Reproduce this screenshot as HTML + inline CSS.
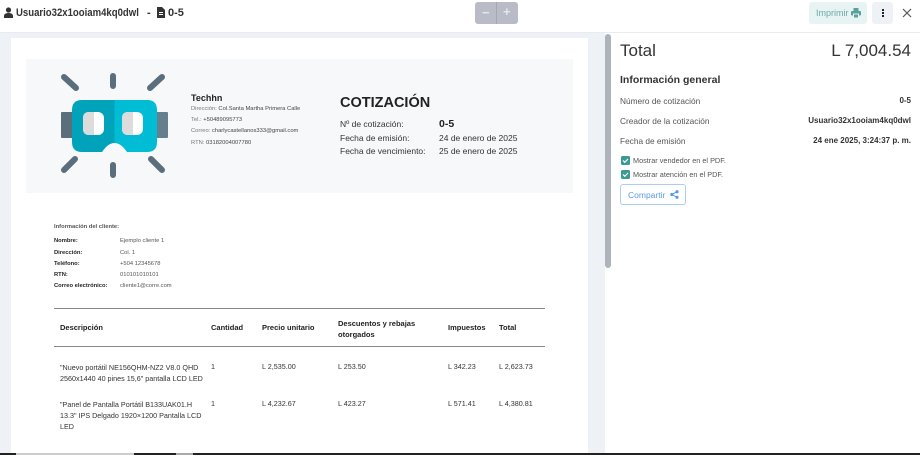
<!DOCTYPE html>
<html><head><meta charset="utf-8"><style>
*{margin:0;padding:0;box-sizing:border-box}
body{width:920px;height:455px;overflow:hidden;background:#fff;font-family:"Liberation Sans",sans-serif;color:#333;position:relative}
.abs{position:absolute}
.top{left:0;top:0;width:920px;height:33px;background:#fff;border-bottom:1px solid #e8ebef}
.left{left:0;top:33px;width:605px;height:422px;background:#eef2f7}
.paper{left:11px;top:38px;width:577px;height:420px;background:#fff}
.hdr{left:26px;top:59px;width:547px;height:134px;background:#f7f8fa}
.sb{left:605px;top:34px;width:6px;height:234px;background:#adb3ba;border-radius:3px}
.t{position:absolute;white-space:nowrap}
.th{font-weight:bold;font-size:7.5px;color:#222}
.td{font-size:7.2px;color:#333}
</style></head><body>
<div class="abs top"></div>
<div class="abs left"></div>
<div class="abs paper"></div>
<div class="abs hdr"></div>
<div class="abs sb"></div>
<!-- top bar -->
<svg class="abs" style="left:4px;top:7px" width="9" height="11" viewBox="0 0 9 11"><circle cx="4.5" cy="3" r="2.6" fill="#333"/><path d="M0 11v-2c0-2 2-3 4.5-3S9 7 9 9v2z" fill="#333"/></svg>
<div class="t" style="left:16px;top:7px;font-size:11px;font-weight:bold;color:#333;transform:scaleX(0.87);transform-origin:left">Usuario32x1ooiam4kq0dwl</div>
<div class="t" style="left:147px;top:7px;font-size:11px;font-weight:bold;color:#333">-</div>
<svg class="abs" style="left:157px;top:7px" width="8" height="11" viewBox="0 0 8 11"><path d="M0 0h5l3 3v8H0z" fill="#333"/><rect x="2" y="5" width="4" height="1" fill="#fff"/><rect x="2" y="7" width="4" height="1" fill="#fff"/></svg>
<div class="t" style="left:168px;top:7px;font-size:11px;font-weight:bold;color:#333">0-5</div>
<div class="abs" style="left:475px;top:2px;width:43px;height:22px;background:#b9bcc6;border-radius:3px"></div>
<div class="abs" style="left:496px;top:2px;width:1px;height:22px;background:#a5a8b2"></div>
<div class="t" style="left:482px;top:5px;color:#e6e7eb;font-size:13px;font-weight:bold">−</div>
<div class="t" style="left:503px;top:4px;color:#e6e7eb;font-size:13px;font-weight:bold">+</div>
<div class="abs" style="left:809px;top:2px;width:58px;height:22px;background:#e8f4f3;border-radius:3px"></div>
<div class="t" style="left:816px;top:8px;font-size:9px;color:#6aaaa5">Imprimir</div>
<svg class="abs" style="left:851px;top:8px" width="10" height="10" viewBox="0 0 10 10"><rect x="2.5" y="0" width="5" height="3" fill="#5aa19c"/><rect x="0" y="3" width="10" height="4.5" rx="1" fill="#5aa19c"/><rect x="2.5" y="6" width="5" height="4" fill="#5aa19c" stroke="#e8f4f3" stroke-width="1"/></svg>
<div class="abs" style="left:872px;top:2px;width:21px;height:22px;background:#eef1f5;border-radius:3px"></div>
<div class="abs" style="left:882px;top:9px;width:2px;height:2px;background:#222;box-shadow:0 3px 0 #222,0 6px 0 #222"></div>
<svg class="abs" style="left:902px;top:8px" width="10" height="10" viewBox="0 0 10 10"><path d="M1 1L9 9M9 1L1 9" stroke="#555" stroke-width="1.2"/></svg>
<!-- logo -->
<svg class="abs" style="left:55px;top:70px" width="120" height="112" viewBox="55 70 120 112">
<defs><clipPath id="m"><path d="M82 100H147Q157 100 157 110V142Q157 152 147 152H127Q121 143 114.5 143Q108 143 102 152H82Q72 152 72 142V110Q72 100 82 100Z"/></clipPath></defs>
<g stroke="#5a6e7b" stroke-width="6" stroke-linecap="round">
<path d="M64 77L76 88M113 76v10M162 77L150 88M64 170L75 159M113 165v10M162 170L151 159"/></g>
<rect x="61" y="112" width="12" height="26" rx="1" fill="#5a6e7b"/>
<rect x="156" y="112" width="12" height="26" rx="1" fill="#65808c"/>
<g clip-path="url(#m)"><rect x="72" y="100" width="43" height="52" fill="#00a3ba"/><rect x="114.5" y="100" width="43" height="52" fill="#00bcd4"/></g>
<rect x="83" y="112" width="21" height="23" rx="6" fill="#fff"/><path d="M89 112h5v23h-5q-6 0-6-6v-11q0-6 6-6z" fill="#dcdcdc"/>
<rect x="122" y="112" width="21" height="23" rx="6" fill="#fff"/><path d="M128 112h5v23h-5q-6 0-6-6v-11q0-6 6-6z" fill="#dcdcdc"/>
</svg>
<div class="t" style="left:191px;top:93px;font-size:9px;font-weight:bold;color:#222">Techhn</div>
<div class="t" style="left:191px;top:106px;font-size:5.8px;color:#777">Dirección: <span style="color:#444">Col.Santa Martha Primera Calle</span></div>
<div class="t" style="left:191px;top:117px;font-size:5.8px;color:#777">Tel.: <span style="color:#444">+50489095773</span></div>
<div class="t" style="left:191px;top:128px;font-size:5.8px;color:#777">Correo: <span style="color:#444">charlycastellanos333@gmail.com</span></div>
<div class="t" style="left:191px;top:140px;font-size:5.8px;color:#777">RTN: <span style="color:#444">03182004007780</span></div>
<div class="t" style="left:340px;top:95px;font-size:14.5px;font-weight:bold;color:#222">COTIZACIÓN</div>
<div class="t" style="left:340px;top:119px;font-size:8.5px;color:#333">Nº de cotización:</div>
<div class="t" style="left:439px;top:118px;font-size:10.5px;font-weight:bold;color:#222">0-5</div>
<div class="t" style="left:340px;top:133px;font-size:8.5px;color:#333">Fecha de emisión:</div>
<div class="t" style="left:439px;top:133px;font-size:8.5px;color:#333">24 de enero de 2025</div>
<div class="t" style="left:340px;top:146px;font-size:8.5px;color:#333">Fecha de vencimiento:</div>
<div class="t" style="left:439px;top:146px;font-size:8.5px;color:#333">25 de enero de 2025</div>
<!-- client -->
<div class="t" style="left:54px;top:224px;font-size:5.8px;font-weight:bold;color:#555">Información del cliente:</div>
<div class="t" style="left:54px;top:238px;font-size:5.8px;font-weight:bold;color:#222">Nombre:</div><div class="t" style="left:120px;top:238px;font-size:5.8px;color:#555">Ejemplo cliente 1</div>
<div class="t" style="left:54px;top:250px;font-size:5.8px;font-weight:bold;color:#222">Dirección:</div><div class="t" style="left:120px;top:250px;font-size:5.8px;color:#555">Col. 1</div>
<div class="t" style="left:54px;top:261px;font-size:5.8px;font-weight:bold;color:#222">Teléfono:</div><div class="t" style="left:120px;top:261px;font-size:5.8px;color:#555">+504 12345678</div>
<div class="t" style="left:54px;top:272px;font-size:5.8px;font-weight:bold;color:#222">RTN:</div><div class="t" style="left:120px;top:272px;font-size:5.8px;color:#555">010101010101</div>
<div class="t" style="left:54px;top:283px;font-size:5.8px;font-weight:bold;color:#222">Correo electrónico:</div><div class="t" style="left:120px;top:283px;font-size:5.8px;color:#555">cliente1@corre.com</div>
<!-- table -->
<div class="abs" style="left:54px;top:308px;width:491px;height:1px;background:#888"></div>
<div class="abs" style="left:54px;top:346px;width:491px;height:1px;background:#888"></div>
<div class="t th" style="left:60px;top:323px">Descripción</div>
<div class="t th" style="left:211px;top:323px">Cantidad</div>
<div class="t th" style="left:262px;top:323px">Precio unitario</div>
<div class="t th" style="left:338px;top:318px;line-height:11px">Descuentos y rebajas<br>otorgados</div>
<div class="t th" style="left:448px;top:323px">Impuestos</div>
<div class="t th" style="left:499px;top:323px">Total</div>
<div class="t td" style="left:60px;top:362px;line-height:11px">"Nuevo portátil NE156QHM-NZ2 V8.0 QHD<br>2560x1440 40 pines 15,6" pantalla LCD LED</div>
<div class="t td" style="left:211px;top:362px">1</div><div class="t td" style="left:262px;top:362px">L 2,535.00</div><div class="t td" style="left:338px;top:362px">L 253.50</div><div class="t td" style="left:448px;top:362px">L 342.23</div><div class="t td" style="left:499px;top:362px">L 2,623.73</div>
<div class="t td" style="left:60px;top:399px;line-height:11px">"Panel de Pantalla Portátil B133UAK01.H<br>13.3" IPS Delgado 1920×1200 Pantalla LCD<br>LED</div>
<div class="t td" style="left:211px;top:399px">1</div><div class="t td" style="left:262px;top:399px">L 4,232.67</div><div class="t td" style="left:338px;top:399px">L 423.27</div><div class="t td" style="left:448px;top:399px">L 571.41</div><div class="t td" style="left:499px;top:399px">L 4,380.81</div>
<!-- right panel -->
<div class="t" style="left:620px;top:41px;font-size:17px;color:#333">Total</div>
<div class="t" style="right:9px;top:41px;font-size:17px;color:#333">L 7,004.54</div>
<div class="t" style="left:620px;top:74px;font-size:10.5px;font-weight:bold;color:#333">Información general</div>
<div class="t" style="left:620px;top:96px;font-size:8.3px;color:#555">Número de cotización</div>
<div class="t" style="right:9px;top:96px;font-size:8px;font-weight:bold;color:#333">0-5</div>
<div class="t" style="left:620px;top:116px;font-size:8.3px;color:#555">Creador de la cotización</div>
<div class="t" style="right:9px;top:116px;font-size:8px;font-weight:bold;color:#333">Usuario32x1ooiam4kq0dwl</div>
<div class="t" style="left:620px;top:136px;font-size:8.3px;color:#555">Fecha de emisión</div>
<div class="t" style="right:9px;top:136px;font-size:8px;font-weight:bold;color:#333">24 ene 2025, 3:24:37 p. m.</div>
<svg class="abs" style="left:621px;top:156px" width="9" height="9" viewBox="0 0 9 9"><rect width="9" height="9" rx="1.5" fill="#3d9a93"/><path d="M2 4.5l1.8 1.8L7 3" stroke="#fff" stroke-width="1.2" fill="none"/></svg>
<div class="t" style="left:633px;top:156px;font-size:7.3px;color:#555">Mostrar vendedor en el PDF.</div>
<svg class="abs" style="left:621px;top:170px" width="9" height="9" viewBox="0 0 9 9"><rect width="9" height="9" rx="1.5" fill="#3d9a93"/><path d="M2 4.5l1.8 1.8L7 3" stroke="#fff" stroke-width="1.2" fill="none"/></svg>
<div class="t" style="left:633px;top:170px;font-size:7.3px;color:#555">Mostrar atención en el PDF.</div>
<div class="abs" style="left:620px;top:184px;width:66px;height:21px;border:1px solid #a9cdf5;border-radius:3px"></div>
<div class="t" style="left:628px;top:190px;font-size:8.5px;color:#5a9be6">Compartir</div>
<svg class="abs" style="left:670px;top:190px" width="9" height="9" viewBox="0 0 9 9"><circle cx="7" cy="1.7" r="1.6" fill="#5a9be6"/><circle cx="7" cy="7.3" r="1.6" fill="#5a9be6"/><circle cx="1.8" cy="4.5" r="1.6" fill="#5a9be6"/><path d="M7 1.7L1.8 4.5L7 7.3" stroke="#5a9be6" fill="none"/></svg>
<!-- bottom strip -->
<div class="abs" style="left:0;top:453px;width:920px;height:2px;background:#222"></div>
<div class="abs" style="left:16px;top:453px;width:118px;height:2px;background:#ccc"></div>
<div class="abs" style="left:176px;top:453px;width:17px;height:2px;background:#aaa"></div>
</body></html>
